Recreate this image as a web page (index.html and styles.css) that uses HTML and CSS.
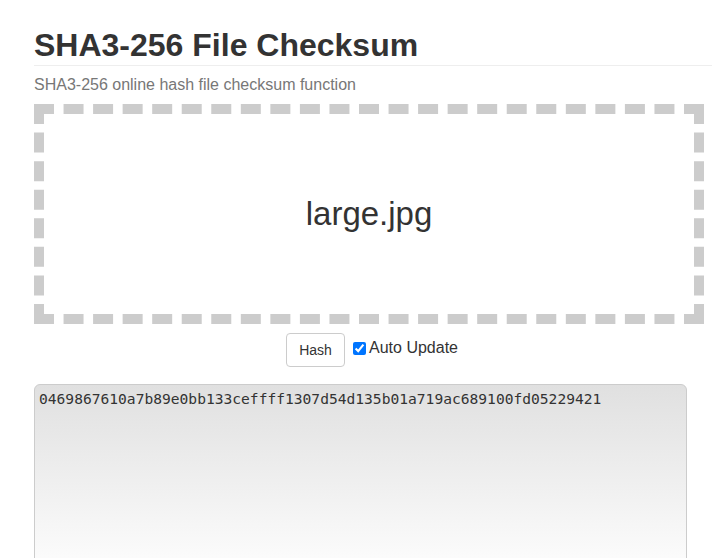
FILE: index.html
```html
<!DOCTYPE html>
<html>
<head>
<meta charset="utf-8">
<link rel="stylesheet" href="styles.css">
</head>
<body>
<div class="page">
  <h1 class="title">SHA3-256 File Checksum</h1>
  <p class="subtitle">SHA3-256 online hash file checksum function</p>
  <div class="dropzone"><span class="filename">large.jpg</span></div>
  <div class="controls">
    <button class="btn">Hash</button>
    <label class="auto"><input type="checkbox" checked class="check">Auto Update</label>
  </div>
  <textarea class="output">0469867610a7b89e0bb133ceffff1307d54d135b01a719ac689100fd05229421</textarea>
</div>
</body>
</html>
```
FILE: styles.css
```css
html, body {
  margin: 0;
  padding: 0;
  background: #fff;
}
.page {
  padding: 0 7px 0 34px;
  font-family: "Liberation Sans", Arial, sans-serif;
  color: #333;
}
.title {
  margin: 0;
  padding-top: 29px;
  padding-bottom: 3px;
  font-size: 32px;
  line-height: 33px;
  font-weight: bold;
  color: #333;
  border-bottom: 1px solid #eee;
}
.subtitle {
  margin: 9px 0 0;
  font-size: 16px;
  line-height: 20px;
  color: #777;
}
.dropzone {
  box-sizing: border-box;
  margin-top: 9px;
  width: 670px;
  height: 220px;
  border: 10px dashed #ccc;
  display: flex;
  align-items: center;
  justify-content: center;
}
.filename {
  font-size: 33px;
  color: #333;
}
.controls {
  width: 676px;
  display: flex;
  justify-content: center;
  align-items: center;
  gap: 8px;
  margin-top: 9px;
}
.btn {
  box-sizing: border-box;
  width: 59px;
  height: 34px;
  background: #fff;
  border: 1px solid #ccc;
  border-radius: 4px;
  font-family: "Liberation Sans", Arial, sans-serif;
  font-size: 14px;
  color: #333;
  padding: 0;
}
.auto {
  display: flex;
  align-items: center;
  font-size: 16px;
  color: #333;
  margin-top: -4px;
}
.check {
  margin: 0 3px 0 0;
  width: 13px;
  height: 13px;
}
.output {
  display: block;
  box-sizing: border-box;
  margin-top: 17px;
  width: 653px;
  height: 200px;
  border: 1px solid #ccc;
  border-radius: 6px;
  padding: 5px 4px;
  background: linear-gradient(#e0e0e0, #ffffff);
  font-family: "DejaVu Sans Mono", monospace;
  font-size: 14.6px;
  line-height: 18px;
  color: #333;
  resize: none;
}
```
